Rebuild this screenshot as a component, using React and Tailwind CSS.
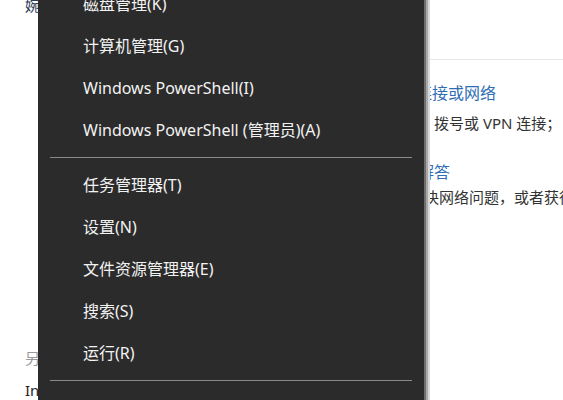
import React from 'react';

const items = [
  ['磁盘管理(K)'],
  ['计算机管理(G)'],
  ['Windows PowerShell(I)'],
  ['Windows PowerShell (管理员)(A)'],
  null,
  ['任务管理器(T)'],
  ['设置(N)'],
  ['文件资源管理器(E)'],
  ['搜索(S)'],
  ['运行(R)'],
  null,
];

const font = { fontFamily: '"Noto Sans", "Noto Sans CJK SC", sans-serif' };

const App = () => {
  return (
    <div className="relative w-[563px] h-[400px] overflow-hidden bg-white" style={font}>
      {/* page behind the menu */}
      <div className="flex h-full">
        <div className="w-[418px] shrink-0 pl-[25px] flex flex-col text-[15px]">
          <div className="h-[10px] -mt-[5px] leading-[20px] text-[#2a3a5a]">婉</div>
          <div className="mt-[343px] leading-[20px] text-[#9a9a9a]">另</div>
          <div className="mt-[12px] leading-[20px] text-[#1f1f1f]">Internet</div>
        </div>
        <div className="flex-1 min-w-0 flex flex-col whitespace-nowrap">
          <div className="mt-[59px] h-px bg-[#e6e6e6]" />
          <div className="mt-[23px] -ml-[2px] text-[16px] leading-[20px] text-[#2f6db5]">连接或网络</div>
          <div className="mt-[10px] pl-[16px] text-[15px] leading-[20px] text-[#333333]">拨号或 VPN 连接；</div>
          <div className="mt-[29px] text-[16px] leading-[20px] text-[#2f6db5]">解答</div>
          <div className="mt-[5px] -ml-[9px] text-[15px] leading-[20px] text-[#333333]">解决网络问题，或者获得帮助</div>
        </div>
      </div>

      {/* context menu */}
      <div className="absolute left-[38px] top-[-17px] w-[392px] h-[440px] flex">
        <div className="flex-1 bg-[#2b2b2b] flex flex-col">
          {items.map((it, i) =>
            it ? (
              <div key={i} className="h-[42px] flex items-center pl-[45px] text-[16px] text-[#f2f2f2] whitespace-nowrap">
                {it[0]}
              </div>
            ) : (
              <div key={i} className="h-[13px] flex items-center px-[12px]">
                <div className="h-px w-full bg-[#8a8a8a]" />
              </div>
            )
          )}
        </div>
        <div className="w-[2px] bg-[#6e6e6e]" />
        <div className="w-[2px] bg-[#a8a8a8]" />
        <div className="w-[2px] bg-[#d8d8d8]" />
      </div>
    </div>
  );
};

export default App;
